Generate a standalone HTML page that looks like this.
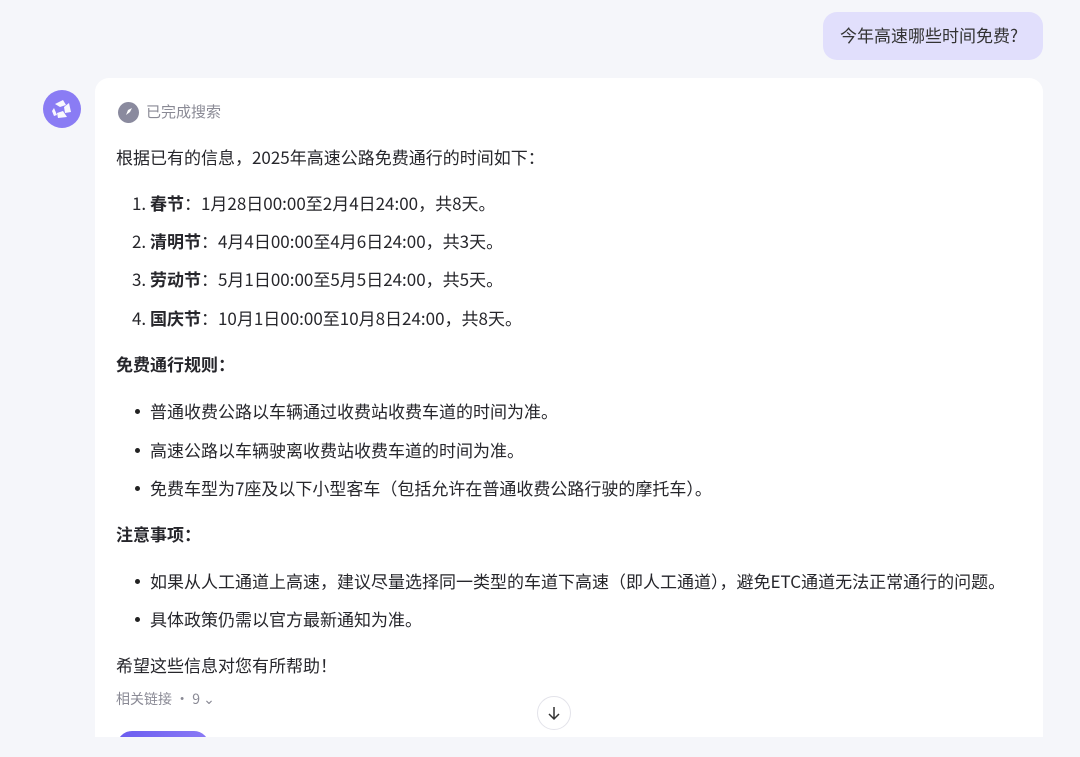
<!DOCTYPE html>
<html><head><meta charset="utf-8"><style>
*{margin:0;padding:0;box-sizing:border-box}
body{width:1080px;height:757px;overflow:hidden;background:#f5f6fa;font-family:"Noto Sans CJK SC","Liberation Sans",sans-serif;color:#26262b;position:relative}
.ub{position:absolute;left:823px;top:12px;width:220px;height:48px;background:#e1dffc;border-radius:14px;font-size:17px;line-height:46px;padding-left:17px;color:#333}
.av{position:absolute;left:43px;top:90px;width:38px;height:38px;border-radius:50%;background:#8a7cf4}
.card{position:absolute;left:95px;top:78px;width:948px;height:659px;background:#fff;border-radius:14px 14px 0 0;overflow:hidden}
.t{position:absolute;left:21px;font-size:17px;white-space:nowrap;line-height:20px}
.b{font-weight:bold}
.dot{position:absolute;left:40px;width:5px;height:5px;border-radius:50%;background:#222}
.foot{position:absolute;left:0;top:737px;width:1080px;height:20px;background:#f5f6fa}
</style></head><body>
<div class="ub">今年高速哪些时间免费?</div>
<div class="av"><svg width="38" height="38" viewBox="0 0 38 38"><g fill="#fff" opacity=".95"><path d="M12 14l8-4 3 5-6 2z"/><path d="M26 13l2 9-6 1-1-6z"/><path d="M24 27l-9 1-1-5 6-2z"/><path d="M11 18l3 7-3 1-2-5z"/></g></svg></div>
<div class="card">
<div style="position:absolute;left:23px;top:24px;width:21px;height:21px;border-radius:50%;background:#8a8a9e"><svg width="21" height="21"><path d="M8 13l2-5 4-2-2 4z" fill="#fff"/></svg></div>
<div class="t" style="left:51px;top:24px;font-size:15px;color:#8a8a95">已完成搜索</div>
<div class="t" style="top:69px">根据已有的信息，2025年高速公路免费通行的时间如下：</div>
<div class="t" style="left:37px;top:115px">1. <span class="b">春节</span>：1月28日00:00至2月4日24:00，共8天。</div>
<div class="t" style="left:37px;top:153px">2. <span class="b">清明节</span>：4月4日00:00至4月6日24:00，共3天。</div>
<div class="t" style="left:37px;top:191px">3. <span class="b">劳动节</span>：5月1日00:00至5月5日24:00，共5天。</div>
<div class="t" style="left:37px;top:230px">4. <span class="b">国庆节</span>：10月1日00:00至10月8日24:00，共8天。</div>
<div class="t b" style="top:276px">免费通行规则：</div>
<div class="dot" style="top:331px"></div><div class="t" style="left:55px;top:323px">普通收费公路以车辆通过收费站收费车道的时间为准。</div>
<div class="dot" style="top:370px"></div><div class="t" style="left:55px;top:362px">高速公路以车辆驶离收费站收费车道的时间为准。</div>
<div class="dot" style="top:408px"></div><div class="t" style="left:55px;top:400px">免费车型为7座及以下小型客车（包括允许在普通收费公路行驶的摩托车）。</div>
<div class="t b" style="top:446px">注意事项：</div>
<div class="dot" style="top:501px"></div><div class="t" style="left:55px;top:493px">如果从人工通道上高速，建议尽量选择同一类型的车道下高速（即人工通道），避免ETC通道无法正常通行的问题。</div>
<div class="dot" style="top:539px"></div><div class="t" style="left:55px;top:531px">具体政策仍需以官方最新通知为准。</div>
<div class="t" style="top:577px">希望这些信息对您有所帮助！</div>
<div class="t" style="top:611px;font-size:14px;color:#8a8a95">相关链接 · 9 ⌄</div>
<div style="position:absolute;left:442px;top:618px;width:34px;height:34px;border-radius:50%;border:1px solid #e3e3ea;background:#fff"><svg width="32" height="32"><path d="M16 10v12M11 17l5 5 5-5" stroke="#333" stroke-width="1.5" fill="none"/></svg></div>
<div style="position:absolute;left:22px;top:653px;width:92px;height:30px;border-radius:15px;background:linear-gradient(90deg,#6a5cf0,#8a7af5)"></div>
</div>
<div class="foot"></div>
</body></html>
